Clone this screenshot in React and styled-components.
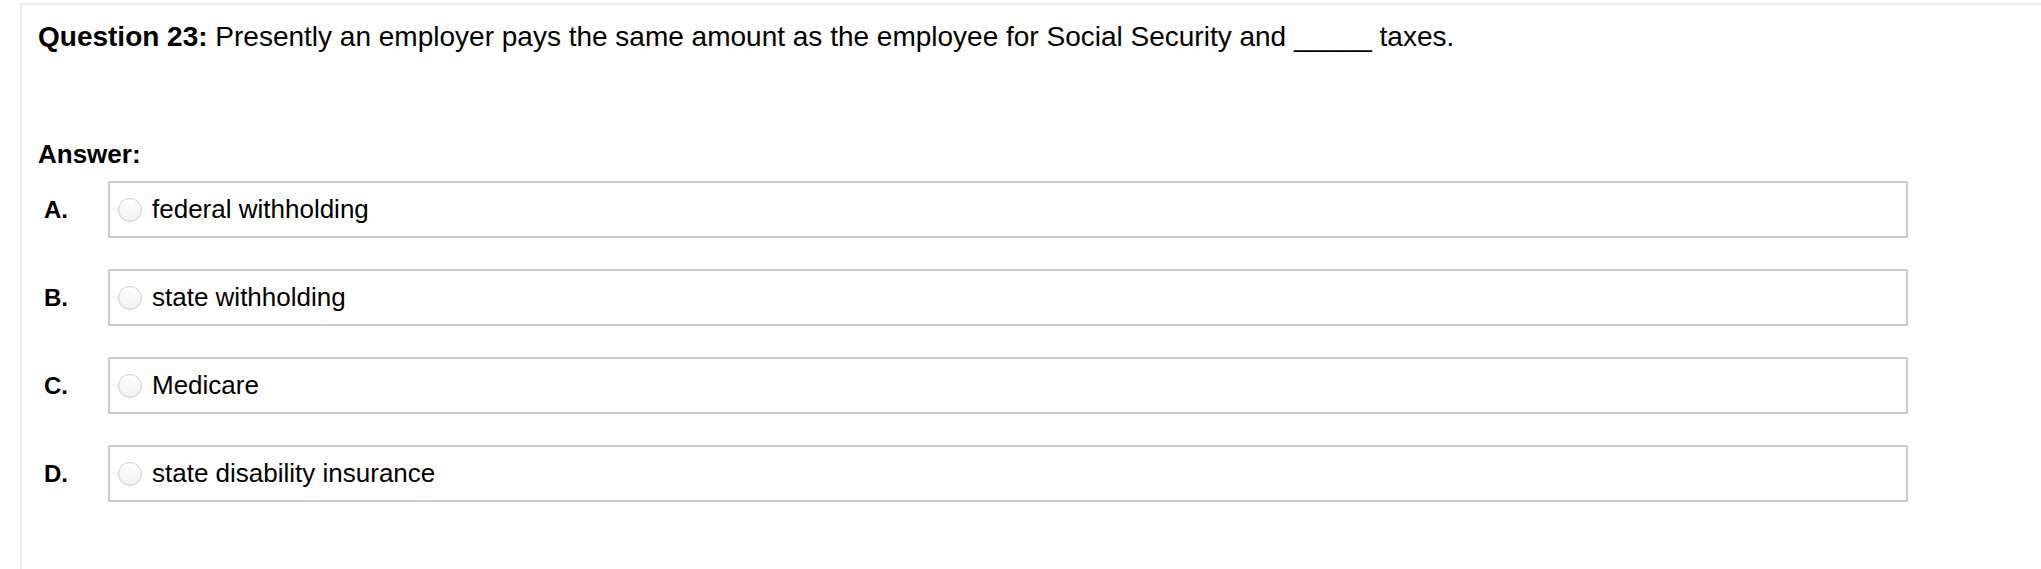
import React from 'react';
import styled, { createGlobalStyle } from 'styled-components';

const GlobalStyle = createGlobalStyle`
  html, body {
    margin: 0;
    padding: 0;
    background: #ffffff;
  }
  body {
    font-family: "Liberation Sans", Arial, Helvetica, sans-serif;
    color: #000000;
  }
`;

const Panel = styled.section`
  margin: 3px 0 0 20px;
  min-height: calc(100vh - 3px);
  box-sizing: border-box;
  border-top: 2px solid #ededed;
  border-left: 2px solid #ededed;
  padding: 16px 0 0 16px;
`;

const Question = styled.p`
  margin: 0;
  font-size: 28px;
  line-height: 32px;
  white-space: nowrap;

  strong {
    font-weight: bold;
  }
`;

const AnswerTitle = styled.h3`
  margin: 86px 0 12px 0;
  font-size: 26px;
  line-height: 30px;
  font-weight: bold;
`;

const Options = styled.div`
  display: flex;
  flex-direction: column;
  gap: 31px;
`;

const Row = styled.label`
  display: flex;
  align-items: center;
  padding-left: 6px;
`;

const Letter = styled.span`
  width: 64px;
  flex: 0 0 64px;
  font-size: 24px;
  font-weight: bold;
  line-height: 28px;
`;

const Choice = styled.div`
  width: 1800px;
  height: 57px;
  box-sizing: border-box;
  border: 2px solid #cccccc;
  display: flex;
  align-items: center;
  padding-left: 8px;
  gap: 10px;
  font-size: 26px;
`;

const Radio = styled.input.attrs({ type: 'radio' })`
  appearance: none;
  -webkit-appearance: none;
  margin: 0;
  width: 24px;
  height: 24px;
  flex: 0 0 24px;
  border-radius: 50%;
  border: 1px solid #cfcfcf;
  background: linear-gradient(#ffffff, #f1f1f1);
  box-shadow: inset 0 -1px 1px rgba(0, 0, 0, 0.04);
  box-sizing: border-box;
`;

const options = [
  { letter: 'A.', text: 'federal withholding' },
  { letter: 'B.', text: 'state withholding' },
  { letter: 'C.', text: 'Medicare' },
  { letter: 'D.', text: 'state disability insurance' },
];

const App = () => {
  return (
    <>
      <GlobalStyle />
      <Panel>
        <Question>
          <strong>Question 23:</strong> Presently an employer pays the same amount as the employee for Social Security and _____ taxes.
        </Question>
        <AnswerTitle>Answer:</AnswerTitle>
        <Options>
          {options.map((opt, i) => (
            <Row key={i}>
              <Letter>{opt.letter}</Letter>
              <Choice>
                <Radio name="q23" />
                <span>{opt.text}</span>
              </Choice>
            </Row>
          ))}
        </Options>
      </Panel>
    </>
  );
};

export default App;
